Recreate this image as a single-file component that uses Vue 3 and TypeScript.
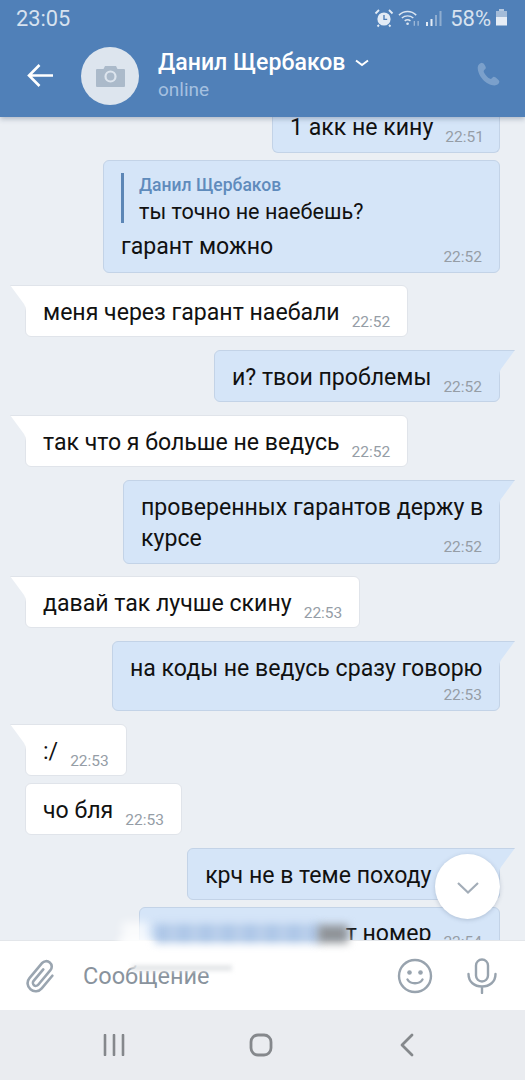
<script setup lang="ts">
interface Msg {
  id: number
  out: boolean
  text: string
  time: string
  top: number
  tail?: boolean
  kind?: 'wide' | 'stack'
}

const messages: Msg[] = [
  { id: 2, out: false, text: 'меня через гарант наебали', time: '22:52', top: 12, tail: true },
  { id: 3, out: true, text: 'и? твои проблемы', time: '22:52', top: 13, tail: true },
  { id: 4, out: false, text: 'так что я больше не ведусь', time: '22:52', top: 13, tail: true },
  { id: 5, out: true, text: 'проверенных гарантов держу в курсе', time: '22:52', top: 13, tail: true, kind: 'wide' },
  { id: 6, out: false, text: 'давай так лучше скину', time: '22:53', top: 12, tail: true },
  { id: 7, out: true, text: 'на коды не ведусь сразу говорю', time: '22:53', top: 13, tail: true, kind: 'stack' },
  { id: 8, out: false, text: ':/', time: '22:53', top: 13, tail: true },
  { id: 9, out: false, text: 'чо бля', time: '22:53', top: 7 },
  { id: 10, out: true, text: 'крч не в теме походу', time: '22:54', top: 13, tail: true }
]
</script>

<template>
  <div class="phone">
    <header class="top">
      <div class="status">
        <span class="clock">23:05</span>
        <div class="status-icons">
          <svg width="20" height="20" viewBox="0 0 20 20">
            <circle cx="10" cy="11" r="6.6" fill="#e3ebf5" />
            <path d="M10 7v4.4h3.2" fill="none" stroke="#5080b8" stroke-width="1.4" />
            <path d="M1.5 5.5 5 2M18.5 5.5 15 2M5 17l-1.5 1.5M15 17l1.5 1.5" stroke="#e3ebf5" stroke-width="1.8" fill="none" />
          </svg>
          <svg width="23" height="20" viewBox="0 0 24 20">
            <path d="M1 7c5-5 13-5 18 0M4 10c3.500-3 8.500-3 12 0M7 13c2-1.600 4-1.600 6 0" fill="none" stroke="#dbe5f1" stroke-width="1.5" />
            <circle cx="10" cy="16" r="1.400" fill="#dbe5f1" />
            <path d="M17 13v5M21 18v-5" stroke="#a9c0dc" stroke-width="1.200" />
          </svg>
          <svg width="18" height="20" viewBox="0 0 18 20">
            <rect x="1" y="14" width="2" height="4" fill="#e3ebf5" />
            <rect x="5.500" y="11" width="2" height="7" fill="#e3ebf5" />
            <rect x="10" y="7" width="2" height="11" fill="#8fadd0" />
            <rect x="14.500" y="3" width="2" height="15" fill="#8fadd0" />
          </svg>
          <span class="pct">58%</span>
          <svg width="13" height="20" viewBox="0 0 13 20">
            <rect x="4" y="1" width="5" height="2" fill="#b4c8e0" />
            <rect x="1" y="3" width="11" height="6" fill="#a3bbd8" />
            <rect x="1" y="9" width="11" height="8.500" fill="#e6edf6" />
          </svg>
        </div>
      </div>
      <div class="bar">
        <svg class="back" width="30" height="26" viewBox="0 0 30 26">
          <path d="M27 13.500H3M13.500 3 3 13.500 13.500 24" fill="none" stroke="#fff" stroke-width="2.600" />
        </svg>
        <div class="avatar">
          <svg width="29" height="21" viewBox="0 0 29 21">
            <path d="M1 3h6.500L9 0h11l1.500 3H28a1 1 0 0 1 1 1v16a1 1 0 0 1-1 1H1a1 1 0 0 1-1-1V4a1 1 0 0 1 1-1z" fill="#abbaca" />
            <circle cx="14.500" cy="10.500" r="5" fill="none" stroke="#dde5ee" stroke-width="2.200" />
          </svg>
        </div>
        <div class="who">
          <div class="name">
            Данил Щербаков
            <svg width="16" height="10" viewBox="0 0 16 10"><path d="M2 2.500 8 7l6-4.500" fill="none" stroke="#fff" stroke-width="2" /></svg>
          </div>
          <div class="online">online</div>
        </div>
        <svg class="call" width="26" height="26" viewBox="0 0 24 24">
          <path d="M6.500 1.500c-2 .3-4 2-4 4.500 0 8 8 16.500 15.500 16.500 2.500 0 4.500-1.500 4.500-3.500 0-1.200-3.700-4.500-5-4.500-1.200 0-1.700 2-3 2-2.200 0-6.500-5-6.500-7 0-1.400 2-1.800 2-3 0-1.400-2-5-3.500-4.500z" fill="#7ba0cb" />
        </svg>
      </div>
    </header>

    <main class="chat">
      <div class="row out first">
        <div class="bubble sent cut">
          <span class="text">1 акк не кину</span>
          <span class="time">22:51</span>
        </div>
      </div>

      <div class="row out reply-row">
        <div class="bubble sent reply">
          <div class="quote">
            <div class="q-name">Данил Щербаков</div>
            <div class="q-text">ты точно не наебешь?</div>
          </div>
          <div class="reply-foot">
            <span class="text">гарант можно</span>
            <span class="time">22:52</span>
          </div>
        </div>
      </div>

      <div
        v-for="m in messages"
        :key="m.id"
        class="row"
        :class="m.out ? 'out' : 'in'"
        :style="{ marginTop: m.top + 'px' }"
      >
        <div
          class="bubble"
          :class="[m.out ? 'sent' : 'got', m.kind, { tail: m.tail }]"
        >
          <span class="text">{{ m.text }}</span>
          <span class="time">{{ m.time }}</span>
        </div>
      </div>

      <div class="row out cutoff">
        <div class="bubble sent last">
          <span class="text">т номер</span>
          <span class="time">22:54</span>
        </div>
      </div>

      <button class="down">
        <svg width="24" height="14" viewBox="0 0 24 14"><path d="M2 2l10 9.500L22 2" fill="none" stroke="#a3adb8" stroke-width="2.200" /></svg>
      </button>
    </main>

    <div class="composer">
      <svg class="clip" width="30" height="36" viewBox="0 0 30 36">
        <path d="M12.500 12v15a3 3 0 0 0 6 0V8a5.500 5.500 0 0 0-11 0v19.500a8 8 0 0 0 16 0V11" transform="rotate(40 15 18) translate(0 -.5)" fill="none" stroke="#9aa5b0" stroke-width="2.600" stroke-linecap="round" />
      </svg>
      <span class="placeholder">Сообщение</span>
      <svg width="36" height="36" viewBox="0 0 36 36" class="smile">
        <circle cx="18" cy="18" r="16" fill="none" stroke="#98a3ae" stroke-width="2.400" />
        <circle cx="12.500" cy="14.500" r="2.300" fill="#98a3ae" />
        <circle cx="23.500" cy="14.500" r="2.300" fill="#98a3ae" />
        <path d="M10.500 21.500c3 5 12 5 15 0" fill="none" stroke="#98a3ae" stroke-width="2.400" stroke-linecap="round" />
      </svg>
      <svg width="30" height="36" viewBox="0 0 30 36">
        <rect x="9" y="1.500" width="12" height="22" rx="6" fill="none" stroke="#98a3ae" stroke-width="2.400" />
        <path d="M1.500 16c0 8 6 12.500 13.500 12.500S28.500 24 28.500 16M15 28.500V35" fill="none" stroke="#98a3ae" stroke-width="2.400" stroke-linecap="round" />
      </svg>
    </div>

    <!-- censor smear over the last message, spills onto the composer -->
    <div class="smear smear-white"></div>
    <div class="smear smear-left"></div>
    <div class="smear smear-blue"></div>
    <div class="smear smear-dark"></div>
    <div class="smear smear-grey"></div>

    <nav class="nav">
      <svg width="24" height="22" viewBox="0 0 24 22"><path d="M3 1v20M12 1v20M21 1v20" stroke="#85888c" stroke-width="2.600" stroke-linecap="round" /></svg>
      <svg width="24" height="24" viewBox="0 0 24 24"><rect x="2" y="2" width="20" height="20" rx="7" fill="none" stroke="#85888c" stroke-width="2.800" /></svg>
      <svg class="nav-back" width="16" height="24" viewBox="0 0 16 24"><path d="M13 2 3 12l10 10" fill="none" stroke="#85888c" stroke-width="2.800" stroke-linecap="round" stroke-linejoin="round" /></svg>
    </nav>
  </div>
</template>

<style scoped>
.phone {
  position: relative;
  width: 525px;
  height: 1080px;
  display: flex;
  flex-direction: column;
  overflow: hidden;
  font-family: Roboto, "Liberation Sans", sans-serif;
  background: #ebeff4;
}
.top {
  position: relative;
  z-index: 3;
  height: 117px;
  flex: none;
  background: #5080b8;
  box-shadow: 0 2px 5px rgba(40, 60, 90, 0.3);
}
.status {
  height: 36px;
  display: flex;
  align-items: center;
  justify-content: space-between;
  padding: 0 17px 0 16px;
  color: #d7e2ef;
}
.clock {
  font-size: 21.800px;
}
.status-icons {
  display: flex;
  align-items: center;
  gap: 4px;
}
.status-icons svg {
  display: block;
}
.pct {
  font-size: 22px;
  margin-left: 3px;
}
.bar {
  height: 81px;
  display: flex;
  align-items: flex-start;
  padding-left: 26px;
}
.back {
  margin-top: 26px;
}
.avatar {
  width: 58px;
  height: 58px;
  margin: 11px 0 0 25px;
  border-radius: 50%;
  background: #dde5ee;
  display: flex;
  align-items: center;
  justify-content: center;
}
.who {
  margin: 11px 0 0 19px;
  flex: 1;
}
.name {
  display: flex;
  align-items: center;
  gap: 9px;
  color: #fff;
  font-size: 23.100px;
  font-weight: 500;
  line-height: 31px;
}
.online {
  font-size: 19px;
  line-height: 24px;
  color: #a5c0e0;
}
.call {
  margin: 25px 24px 0 0;
}
.chat {
  position: relative;
  flex: 1;
  min-height: 0;
  display: flex;
  flex-direction: column;
  padding-right: 25px;
  overflow: hidden;
}
.row {
  display: flex;
  flex: none;
}
.row.out {
  justify-content: flex-end;
}
.row.in {
  padding-left: 25px;
}
.first {
  margin-top: -7px;
}
.reply-row {
  margin-top: 7px;
}
.bubble {
  position: relative;
  box-sizing: border-box;
  min-height: 52px;
  display: flex;
  align-items: center;
  border-radius: 6px;
  padding: 4px 17px 0 17px;
  font-size: 23.100px;
  color: #111;
}
.sent {
  background: #d5e5f8;
  border: 1px solid #c3d3e7;
}
.got {
  background: #fff;
  border: 1px solid #e0e4ea;
}
.tail.sent {
  border-top-right-radius: 0;
}
.tail.got {
  border-top-left-radius: 0;
}
.tail.sent::after,
.tail.got::before {
  content: "";
  position: absolute;
  top: -1px;
  width: 17px;
  height: 26px;
}
.tail.sent::after {
  right: -16px;
  background: linear-gradient(#c3d3e7 1px, #d5e5f8 1px);
  clip-path: path("M0 0H17L3 19Q1 22 1 26H0Z");
}
.tail.got::before {
  left: -16px;
  background: linear-gradient(#e0e4ea 1px, #fff 1px);
  clip-path: path("M0 0H17V26H16Q16 22 14 19Z");
}
.text {
  line-height: 30px;
  white-space: nowrap;
}
.time {
  font-size: 15.500px;
  color: #959da6;
  margin-left: 12px;
  align-self: flex-end;
  padding-bottom: 5px;
  line-height: 18px;
  white-space: nowrap;
}
.cut {
  width: 228px;
  height: 43px;
  min-height: 0;
  padding-top: 0;
  border-top: none;
  border-radius: 0 0 6px 6px;
}
.cut .text {
  margin-bottom: 7px;
}
.cut .time {
  padding-bottom: 6px;
}
.reply {
  width: 397px;
  height: 113px;
  display: block;
  padding: 12px 17px 0 17px;
}
.quote {
  border-left: 3px solid #5c86b6;
  padding-left: 15px;
  height: 50px;
}
.q-name {
  font-size: 17.500px;
  font-weight: 500;
  color: #5f8bbc;
  line-height: 24px;
}
.q-text {
  font-size: 21.600px;
  line-height: 29px;
}
.reply-foot {
  display: flex;
  justify-content: space-between;
  margin-top: 9px;
}
.reply-foot .time {
  align-self: flex-start;
  padding-bottom: 0;
  margin-top: 16px;
}
.wide {
  width: 377px;
  height: 84px;
  display: block;
  padding: 11px 10px 0 17px;
}
.wide .text {
  display: block;
  white-space: normal;
  line-height: 31px;
}
.wide .time {
  position: absolute;
  right: 17px;
  bottom: 0;
  padding-bottom: 7px;
}
.stack {
  width: 388px;
  height: 70px;
  display: block;
  padding-top: 12px;
}
.stack .text {
  display: block;
}
.stack .time {
  display: block;
  margin: 2px 0 0;
  padding: 0;
  text-align: right;
}
.cutoff {
  margin-top: 7px;
}
.last {
  width: 361px;
  height: 60px;
  align-items: flex-start;
  padding-top: 11px;
  justify-content: flex-end;
}
.last .time {
  align-self: flex-start;
  padding: 14px 0 0;
}
.down {
  position: absolute;
  right: 25px;
  top: 737px;
  width: 65px;
  height: 65px;
  padding: 6px 0 0;
  border: none;
  border-radius: 50%;
  background: #fff;
  box-shadow: 0 1px 4px rgba(60, 80, 110, 0.25);
}
.composer {
  position: relative;
  z-index: 2;
  height: 70px;
  flex: none;
  box-sizing: border-box;
  display: flex;
  align-items: center;
  background: #fff;
  border-top: 1px solid #e3e6ea;
  padding: 0 28px 0 26px;
}
.clip {
  flex: none;
}
.placeholder {
  flex: 1;
  margin-left: 27px;
  font-size: 23.500px;
  color: #89939d;
}
.smile {
  margin-right: 34px;
}
.smear {
  position: absolute;
  z-index: 4;
}
.smear-white {
  left: 118px;
  top: 940px;
  width: 235px;
  height: 24px;
  background: #fff;
  filter: blur(5px);
}
.smear-left {
  left: 122px;
  top: 922px;
  width: 26px;
  height: 26px;
  background: rgba(255, 255, 255, 0.75);
  filter: blur(5px);
}
.smear-blue {
  left: 155px;
  top: 924px;
  width: 165px;
  height: 19px;
  background: repeating-linear-gradient(90deg, #adc6e7 0 14px, #bbd0eb 14px 22px);
  filter: blur(4px);
}
.smear-dark {
  left: 318px;
  top: 925px;
  width: 30px;
  height: 18px;
  background: #8f9398;
  filter: blur(4px);
}
.smear-grey {
  left: 132px;
  top: 965px;
  width: 100px;
  height: 6px;
  background: rgba(226, 228, 231, 0.9);
  filter: blur(2px);
}
.nav {
  height: 70px;
  flex: none;
  display: flex;
  align-items: center;
  background: #eaecf0;
  padding-left: 102px;
  gap: 123px;
}
.nav-back {
  margin-left: 3px;
}
</style>

<style>
html,
body {
  margin: 0;
  background: #ebeff4;
}
</style>
